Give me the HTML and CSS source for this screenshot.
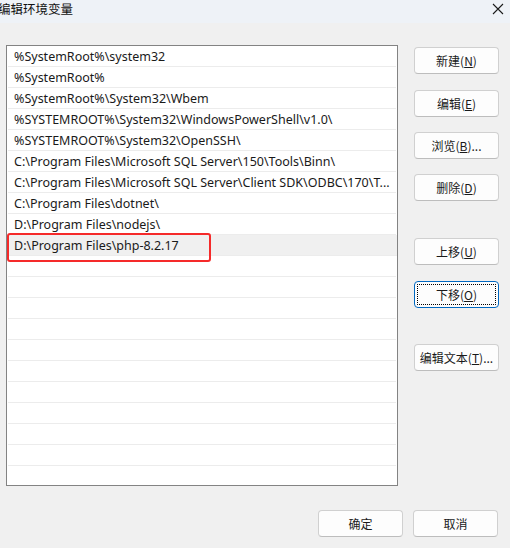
FILE: index.html
```html
<!DOCTYPE html>
<html lang="zh-CN">
<head>
<meta charset="utf-8">
<title>编辑环境变量</title>
<link rel="stylesheet" href="styles.css">
</head>
<body>
<div class="dialog">
  <div class="titlebar">
    <span class="title">编辑环境变量</span>
    <svg class="close" width="12" height="12" viewBox="0 0 12 12"><path d="M1 1L11 11M11 1L1 11" stroke="#1b1b1b" stroke-width="1.1" fill="none"/></svg>
  </div>
  <div class="content">
    <div class="listwrap">
      <div class="list">
        <div class="row">%SystemRoot%\system32</div>
        <div class="row">%SystemRoot%</div>
        <div class="row">%SystemRoot%\System32\Wbem</div>
        <div class="row">%SYSTEMROOT%\System32\WindowsPowerShell\v1.0\</div>
        <div class="row">%SYSTEMROOT%\System32\OpenSSH\</div>
        <div class="row">C:\Program Files\Microsoft SQL Server\150\Tools\Binn\</div>
        <div class="row">C:\Program Files\Microsoft SQL Server\Client SDK\ODBC\170\T...</div>
        <div class="row">C:\Program Files\dotnet\</div>
        <div class="row">D:\Program Files\nodejs\</div>
        <div class="row selected">D:\Program Files\php-8.2.17</div>
        <div class="row"></div>
        <div class="row"></div>
        <div class="row"></div>
        <div class="row"></div>
        <div class="row"></div>
        <div class="row"></div>
        <div class="row"></div>
        <div class="row"></div>
        <div class="row"></div>
        <div class="row"></div>
        <div class="row"></div>
      </div>
      <div class="highlight"></div>
    </div>
    <div class="side">
      <button class="btn b-new">新建(<u>N</u>)</button>
      <button class="btn b-edit">编辑(<u>E</u>)</button>
      <button class="btn b-browse">浏览(<u>B</u>)...</button>
      <button class="btn b-del">删除(<u>D</u>)</button>
      <button class="btn b-up">上移(<u>U</u>)</button>
      <button class="btn b-down focused"><span class="focusring">下移(<u>O</u>)</span></button>
      <button class="btn b-text">编辑文本(<u>T</u>)...</button>
    </div>
  </div>
  <div class="footer">
    <button class="btn">确定</button>
    <button class="btn">取消</button>
  </div>
</div>
</body>
</html>
```
FILE: styles.css
```css
* { box-sizing: border-box; }
html, body {
  margin: 0;
  padding: 0;
  width: 510px;
  height: 548px;
  overflow: hidden;
  background: #f0f0f0;
  font-family: "Noto Sans", "Noto Sans CJK SC", sans-serif;
  font-size: 12px;
  color: #1a1a1a;
}
.dialog {
  display: flex;
  flex-direction: column;
  width: 510px;
  height: 548px;
}
.titlebar {
  height: 23px;
  background: #eef2f7;
  display: flex;
  align-items: center;
  justify-content: space-between;
  padding: 0 6px 6px 0;
}
.title {
  margin-left: -2px;
  font-size: 12.5px;
  font-family: "Noto Sans CJK SC", sans-serif;
  line-height: 14px;
  color: #111;
}
.close {
  display: block;
  margin-top: 1px;
}
.content {
  display: flex;
  padding: 22px 0 0 6px;
}
.listwrap {
  position: relative;
  width: 392px;
  height: 441px;
}
.list {
  width: 392px;
  height: 441px;
  background: #fff;
  border: 1px solid #838383;
  overflow: hidden;
}
.row {
  height: 21px;
  margin: 0 1px;
  border-bottom: 1px solid #ececec;
  padding: 2px 0 0 6px;
  font-size: 12.5px;
  line-height: 18px;
  white-space: nowrap;
  overflow: hidden;
  color: #1a1a1a;
}
.row.selected {
  background: #f0f0f0;
  margin: 0;
  padding-left: 7px;
}
.highlight {
  position: absolute;
  left: 1px;
  top: 188px;
  width: 204px;
  height: 29px;
  border: 2.5px solid #f52a2a;
  border-radius: 3px;
}
.side {
  display: flex;
  flex-direction: column;
  margin-left: 16px;
  padding-top: 2px;
  width: 85px;
}
.btn {
  width: 85px;
  height: 27px;
  padding: 0;
  background: #fdfdfd;
  border: 1px solid #d0d0d0;
  border-bottom-color: #bdbdbd;
  border-radius: 4px;
  font-family: "Noto Sans CJK SC", "Noto Sans", sans-serif;
  font-size: 12px;
  color: #1a1a1a;
  display: flex;
  align-items: center;
  justify-content: center;
}
.btn u { text-underline-offset: 1px; }
.b-edit { margin-top: 16px; }
.b-browse { margin-top: 15px; }
.b-del { margin-top: 15px; }
.b-up { margin-top: 37px; }
.b-down { margin-top: 16px; }
.b-text { margin-top: 36px; }
.focused {
  border: 1px solid #0067c0;
  padding: 2px;
}
.focusring {
  width: 100%;
  height: 100%;
  border: 1px dotted #000;
  border-radius: 1px;
  display: flex;
  align-items: center;
  justify-content: center;
}
.footer {
  display: flex;
  justify-content: flex-end;
  gap: 10px;
  padding: 24px 12px 0 0;
}
```
